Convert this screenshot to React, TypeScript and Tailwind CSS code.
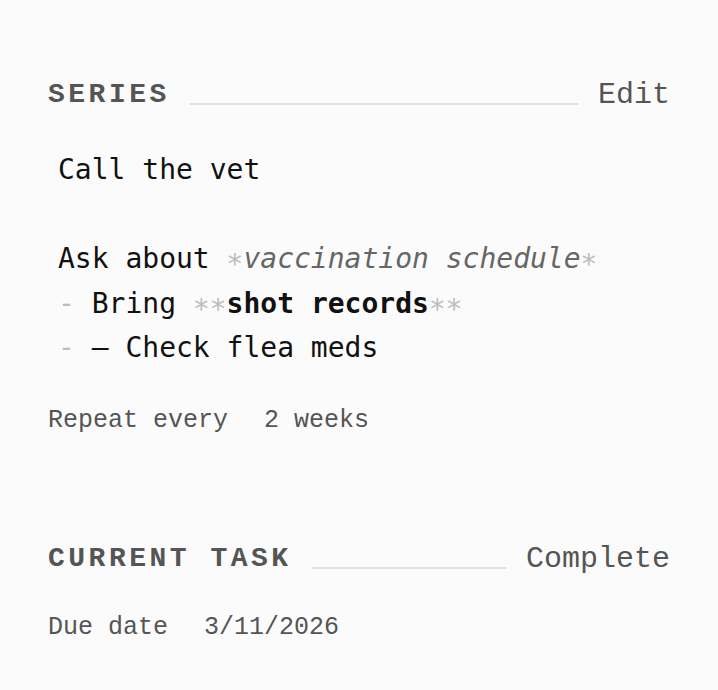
import React from 'react';

const label = "font-['Liberation_Mono',monospace]";
const editor = "font-['DejaVu_Sans_Mono',monospace]";

function SectionHeader({ title, action }: { title: string; action: string }) {
  return (
    <div className="flex items-end">
      <div
        className={`${label} text-[28px] font-bold leading-[36px] tracking-[3.5px] text-[#555555]`}
      >
        {title}
      </div>
      <div className="mx-5 mb-[8px] h-[2px] flex-1 bg-[#dedede]" />
      <button className={`${label} text-[30px] leading-[36px] text-[#555555]`}>
        {action}
      </button>
    </div>
  );
}

function Field({ name, value }: { name: string; value: string }) {
  return (
    <div
      className={`${label} flex gap-[36px] text-[25px] leading-[30px] text-[#555555]`}
    >
      <span>{name}</span>
      <span>{value}</span>
    </div>
  );
}

export default function App() {
  const mark = 'text-[#bdbdbd]';

  return (
    <div className="min-h-screen w-full bg-[#fbfbfb] px-12 pt-[77px]">
      {/* series */}
      <SectionHeader title="SERIES" action="Edit" />
      <div
        className={`${editor} mt-[35px] pl-[10px] text-[28px] leading-[44.5px] text-[#111111]`}
      >
        <div>Call the vet</div>
        <div>&nbsp;</div>
        <div className="whitespace-pre">
          Ask about <span className={mark}>∗</span>
          <span className="italic text-[#666666]">vaccination schedule</span>
          <span className={mark}>∗</span>
        </div>
        <div className="whitespace-pre">
          <span className={mark}>-</span> Bring <span className={mark}>∗∗</span>
          <span className="font-bold">shot records</span>
          <span className={mark}>∗∗</span>
        </div>
        <div className="whitespace-pre">
          <span className={mark}>-</span> – Check flea meds
        </div>
      </div>
      <div className="mt-[35px]">
        <Field name="Repeat every" value="2 weeks" />
      </div>

      {/* current task */}
      <div className="mt-[105px]">
        <SectionHeader title="CURRENT TASK" action="Complete" />
      </div>
      <div className="mt-[36px]">
        <Field name="Due date" value="3/11/2026" />
      </div>
    </div>
  );
}
